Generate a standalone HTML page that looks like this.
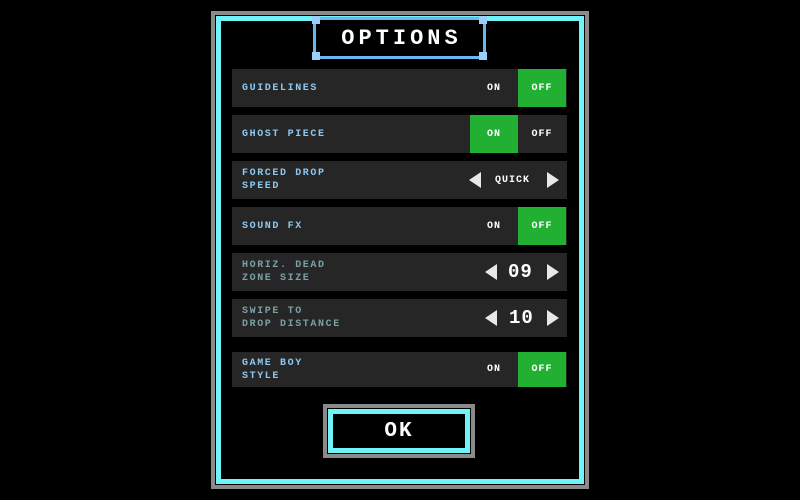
<!DOCTYPE html>
<html><head><style>
*{margin:0;padding:0;box-sizing:border-box}
body{width:800px;height:500px;background:#000;position:relative;overflow:hidden;font-family:"Liberation Mono",monospace;font-weight:bold}
.abs{position:absolute}
.row{position:absolute;left:232px;width:335px;height:38px;background:#262626}
.lbl{position:absolute;left:10px;top:0;height:100%;display:flex;align-items:center;font-size:10px;line-height:13px;color:#8cc8f0;letter-spacing:1.6px}
.dis{color:#7aa0a8}
.on,.off{position:absolute;top:0;width:48px;height:100%;display:flex;align-items:center;justify-content:center;font-size:10px;color:#fff;letter-spacing:1px}
.on{left:238px}.off{left:286px}
.g{background:#22b033}
.arr{position:absolute;top:0;height:100%;display:flex;align-items:center;color:#e8e8e8}
.tri{width:0;height:0;border-top:8px solid transparent;border-bottom:8px solid transparent}
.tl{border-right:12px solid #e8e8e8}.tr{border-left:12px solid #e8e8e8}
.val{position:absolute;top:0;height:100%;display:flex;align-items:center;color:#fff}
</style></head><body>
<div class="abs" style="left:211px;top:11px;width:378px;height:478px;border:4px solid #8a8a8a"></div>
<div class="abs" style="left:216px;top:16px;width:368px;height:468px;border:5px solid #6ef4f8"></div>
<div class="abs" style="left:313px;top:17px;width:173px;height:42px;background:#000;border:3px solid #6ab8f0"></div>
<div class="abs" style="left:312px;top:16px;width:8px;height:8px;background:#9ad0f8"></div>
<div class="abs" style="left:479px;top:16px;width:8px;height:8px;background:#9ad0f8"></div>
<div class="abs" style="left:312px;top:52px;width:8px;height:8px;background:#9ad0f8"></div>
<div class="abs" style="left:479px;top:52px;width:8px;height:8px;background:#9ad0f8"></div>
<div class="abs" style="left:313px;top:17px;width:173px;height:42px;display:flex;align-items:center;justify-content:center;color:#fff;font-size:22px;letter-spacing:4px;padding-left:4px">OPTIONS</div>

<div class="row" style="top:69px"><div class="lbl">GUIDELINES</div><div class="on">ON</div><div class="off g">OFF</div></div>
<div class="row" style="top:115px"><div class="lbl">GHOST PIECE</div><div class="on g">ON</div><div class="off">OFF</div></div>
<div class="row" style="top:161px"><div class="lbl">FORCED DROP<br>SPEED</div>
<div class="arr" style="left:237px"><div class="tri tl"></div></div>
<div class="val" style="left:263px;font-size:10px;letter-spacing:1px">QUICK</div>
<div class="arr" style="left:315px"><div class="tri tr"></div></div></div>
<div class="row" style="top:207px"><div class="lbl">SOUND FX</div><div class="on">ON</div><div class="off g">OFF</div></div>
<div class="row" style="top:253px"><div class="lbl dis">HORIZ. DEAD<br>ZONE SIZE</div>
<div class="arr" style="left:253px"><div class="tri tl"></div></div>
<div class="val" style="left:276px;font-size:19px;letter-spacing:1px">09</div>
<div class="arr" style="left:315px"><div class="tri tr"></div></div></div>
<div class="row" style="top:299px"><div class="lbl dis">SWIPE TO<br>DROP DISTANCE</div>
<div class="arr" style="left:253px"><div class="tri tl"></div></div>
<div class="val" style="left:277px;font-size:19px;letter-spacing:1px">10</div>
<div class="arr" style="left:315px"><div class="tri tr"></div></div></div>
<div class="row" style="top:352px;height:35px"><div class="lbl">GAME BOY<br>STYLE</div><div class="on">ON</div><div class="off g">OFF</div></div>

<div class="abs" style="left:323px;top:404px;width:152px;height:54px;border:4px solid #8a8a8a"></div>
<div class="abs" style="left:328px;top:409px;width:142px;height:44px;border:5px solid #6ef4f8;display:flex;align-items:center;justify-content:center;color:#fff;font-size:21px;letter-spacing:2px">OK</div>
</body></html>
